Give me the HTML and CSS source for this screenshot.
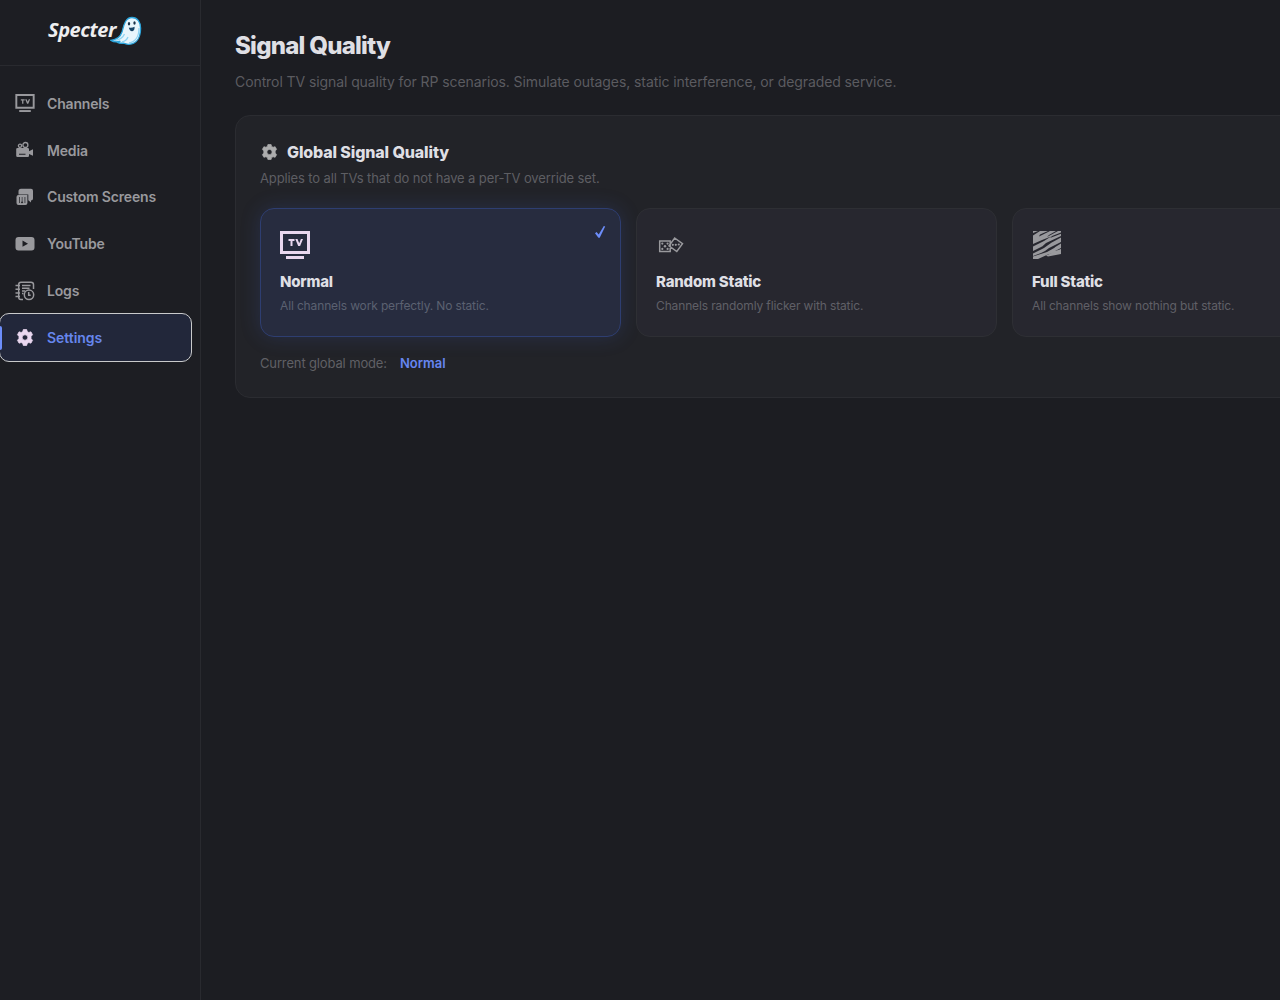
FILE: index.html
```html
<!DOCTYPE html>
<html lang="en">
<head>
<meta charset="utf-8">
<title>Specter – Signal Quality</title>
<link rel="stylesheet" href="styles.css">
</head>
<body>
<svg class="defs" width="0" height="0" aria-hidden="true">
  <symbol id="tv" viewBox="0 0 30 28">
    <path fill-rule="evenodd" d="M0 0h30v23H0zM3 3v17h24V3z"/>
    <path d="M6 25h18v3H6z"/>
    <path d="M8.500 8h6v2h-2v5h-2v-5h-2zM15.300 8h2.200l1.700 4.200L20.900 8h2.100l-2.900 7h-1.900z"/>
  </symbol>
  <symbol id="gear" viewBox="0 0 16 16">
    <path fill-rule="evenodd" stroke="currentColor" stroke-width=".7" stroke-linejoin="round" d="M6.400.5h3.200l.5 1.900 1.500.85 2-.6 1.500 2.700L13.700 7v2l1.400 1.650-1.500 2.700-2-.6-1.500.85-.5 1.900H6.400l-.5-1.900-1.500-.85-2 .6-1.500-2.700L2.300 9V7L.9 5.350l1.500-2.700 2 .6 1.500-.85zM8 5.400a2.600 2.600 0 1 0 0 5.200 2.600 2.600 0 0 0 0-5.200z"/>
  </symbol>
</svg>
<div class="app">
  <aside class="sidebar">
    <div class="brand">
      <span class="brand-name">Specter</span>
      <svg class="ghost" width="32" height="30" viewBox="0 0 32 30">
        <path d="M22 1.500c5.500 0 8.700 4.700 8.600 11C30.500 21 27 28 19 28.300c-2.500.1-4-.7-5.500-1.200-2 .3-4.500.1-6-.7 1-.2 2-.6 2.800-1.200-2.700.8-6.800.8-9.300-.8 6-.7 9.500-3.900 11-8.400C13.700 10 15 1.500 22 1.500z" fill="#e8f5fc" stroke="#2ca5dc" stroke-width="1.300"/>
        <path d="M29 12c0 8-3.500 14-10 14.800M5 24.400c5-.8 8-3 9.500-6.500M12 26c3-.8 5-2.500 6-5" fill="none" stroke="#8fd3f2" stroke-width="1.300"/>
        <ellipse cx="19" cy="7.700" rx="1.200" ry="1.800" fill="#193249"/>
        <ellipse cx="24.500" cy="7" rx="1.200" ry="1.800" fill="#193249"/>
        <path d="M18.800 11.500c2 .5 4 .2 5.800-.7.200 2.500-.8 4.400-2.400 4.500-1.600.1-2.900-1.300-3.400-3.800z" fill="#174467"/>
      </svg>
    </div>
    <nav class="nav">
      <a class="nav-item"><svg class="nav-icon" width="20" height="18"><use href="#tv"/></svg><span>Channels</span></a>
      <a class="nav-item"><svg class="nav-icon" width="20" height="18" viewBox="0 0 20 18">
        <g fill="none" stroke="currentColor" stroke-width="1.300"><circle cx="5" cy="4.800" r="1.600"/><circle cx="10.400" cy="4" r="2.500"/></g>
        <path fill-rule="evenodd" d="M2.500 7h10.300q1.200 0 1.200 1.200v2L18 8.200v6.600l-4-1.700v1.700q0 1.200-1.200 1.200H2.500q-1.300 0-1.300-1.200V8.200Q1.200 7 2.500 7zM4 12.800v1h6.500v-1z"/></svg><span>Media</span></a>
      <a class="nav-item"><svg class="nav-icon" width="20" height="18" viewBox="0 0 20 18">
        <path d="M6 .8h10q2 0 2 2v7.700q0 2-2 2v2L13.300 12.200V6.500H3.500V3.300Q3.500.8 6 .8z"/>
        <path fill-rule="evenodd" d="M3.500 7.100h8.900V15q0 2-2 2H3.500q-2 0-2-2V9.100q0-2 2-2zM4.300 9v6H5V9zm2.500 0v4.500l-1 .8 1.200 1.200 1.300-1.200-.9-.8V9zm2.800 0v6h.7V9z"/></svg><span>Custom Screens</span></a>
      <a class="nav-item"><svg class="nav-icon" width="20" height="18" viewBox="0 0 20 18"><path fill-rule="evenodd" d="M3.500 2h13q3 0 3 3v7.500q0 3-3 3h-13q-3 0-3-3V5q0-3 3-3zM7.500 5.500v6.300L13 8.650z"/></svg><span>YouTube</span></a>
      <a class="nav-item"><svg class="nav-icon" width="20" height="20" viewBox="0 0 20 20"><g fill="none" stroke="currentColor" stroke-width="1.500">
        <path d="M8 18.500H6q-2.300 0-2.300-2.300V3.500q0-2.300 2.300-2.300h10q2.500 0 2.500 2.300V8M.5 4.500h4.500M.5 8.200h4.500M.5 12h4.500M.5 15.600h4.500M7 4.500h8.500M7 7.200h7.500M7 9.900h3.200M7 12.600h1.500"/><circle cx="14" cy="13.800" r="4.700"/><path d="M13.700 11v3.200h2"/></g></svg><span>Logs</span></a>
      <a class="nav-item active"><svg class="nav-icon gear" width="20" height="17"><use href="#gear"/></svg><span>Settings</span></a>
    </nav>
  </aside>
  <main class="main">
    <h1>Signal Quality</h1>
    <p class="lead">Control TV signal quality for RP scenarios. Simulate outages, static interference, or degraded service.</p>
    <section class="card">
      <h2><svg width="19" height="16"><use href="#gear"/></svg><span>Global Signal Quality</span></h2>
      <p class="hint">Applies to all TVs that do not have a per-TV override set.</p>
      <div class="options">
        <div class="option selected">
          <svg class="option-icon" width="30" height="28"><use href="#tv"/></svg>
          <h3>Normal</h3><p>All channels work perfectly. No static.</p>
          <svg class="check" width="12" height="14" viewBox="0 0 12 14"><path d="M1 8.300 2.600 7l2.100 2.600L9.800 1l1.400.5-5.500 11.300H4.400z"/></svg>
        </div>
        <div class="option">
          <svg class="option-icon" width="30" height="28" viewBox="0 0 30 28">
            <g fill="none" stroke="currentColor" stroke-width="1.500"><path d="M3.700 10h10.500v10.500H3.700zM18.700 7l7.800 5.700-5.700 7.800L13 14.800z"/></g>
            <circle cx="6.300" cy="12.600" r="1.100"/><circle cx="11.600" cy="12.600" r="1.100"/><circle cx="6.300" cy="17.900" r="1.100"/><circle cx="11.600" cy="17.900" r="1.100"/>
            <circle cx="9" cy="15.200" r="1.200"/><circle cx="16.800" cy="13.800" r="1.100"/><circle cx="19.800" cy="13.800" r="1.100"/><circle cx="22.800" cy="13.500" r="1.100"/></svg>
          <h3>Random Static</h3><p>Channels randomly flicker with static.</p>
        </div>
        <div class="option">
          <svg class="option-icon" width="30" height="28" viewBox="0 0 30 28">
            <path d="M1 0h28v28H1z"/>
            <path class="scratch" d="M1 2 6 0H8L1 4.500zM8 3.500 16 0h2L7 5.500zM17 4 24 0h2L15 6zM20 5 29 1.500v1.300L18 7zM1 13 10 9 19 5.500 12 10 1 15.500zM14 12 29 5v1.500L17 13l-9 4.500zM1 20 11 15l8-3-7 5-11 5.500zM17 17 29 11v1.500L20 18l-9 3.500zM9 22l10-5 4-.5-8 4.500-14 4.500V25zM23 20l6-3v1.500zM6 28l11-5 12-1v6z"/>
            <path d="M14 24.500 29 18v5l-13 2.500z"/>
          </svg>
          <h3>Full Static</h3><p>All channels show nothing but static.</p>
        </div>
      </div>
      <div class="mode"><span>Current global mode:</span><strong>Normal</strong></div>
    </section>
  </main>
</div>
</body>
</html>
```
FILE: styles.css
```css
* { box-sizing: border-box; }
body { margin: 0; background: #1c1d22; color: #dfdfe4; font-family: Inter, "Liberation Sans", sans-serif; overflow: hidden; }
h1, h2, h3, p { margin: 0; }
svg { fill: currentColor; flex: none; }
.defs { display: block; }
.app { display: flex; height: 1000px; overflow: hidden; }
.sidebar { width: 201px; flex: none; background: #1d1e23; border-right: 1px solid #292a2f; }
.brand { height: 66px; border-bottom: 1px solid #292a2f; display: flex; padding: 16px 0 0 48px; }
.brand-name { width: 62px; font: italic 700 20px/27px "Open Sans", sans-serif; letter-spacing: -0.45px; color: #eeeef0; white-space: nowrap; }
.nav { padding-top: 14px; display: flex; flex-direction: column; }
.nav-item { height: 46.8px; display: flex; align-items: center; gap: 12px; padding-left: 15px; color: #99999d; font-size: 14px; font-weight: 600; letter-spacing: -0.17px; }
.nav-icon { width: 20px; }
.active { width: 193px; height: 49px; margin: -1px 0 0 -1px; padding-left: 15px; background: #22273a; border: 1px solid #c9cacb; border-radius: 10px; color: #6686ed; letter-spacing: -0.05px; position: relative; }
.active::before { content: ""; position: absolute; left: -1px; top: 12px; width: 3px; height: 24px; background: #6c8dfa; border-radius: 0 2px 2px 0; }
.gear { color: #e9d7ef; }
.main { flex: 1; min-width: 0; overflow: hidden; padding: 31px 0 0 34px; }
h1 { font-size: 24px; line-height: 29px; font-weight: 800; letter-spacing: -0.75px; }
.lead { margin-top: 12px; font-size: 14px; line-height: 20px; letter-spacing: -0.087px; color: #5b5b60; }
.card { width: 1162px; margin-top: 23px; height: 283px; padding: 26px 24px 0; background: #222328; border: 1px solid #2b2c31; border-radius: 15px; }
h2 { display: flex; align-items: center; gap: 8px; font-size: 16px; line-height: 20px; font-weight: 800; letter-spacing: -0.13px; }
h2 svg { color: #acacad; }
.hint { margin-top: 6px; font-size: 13px; line-height: 20px; letter-spacing: -0.12px; color: #5e5e63; }
.options { margin-top: 20px; display: grid; grid-template-columns: repeat(3, 361px); gap: 15px; }
.option { height: 129px; padding: 22px 19px; background: #27272f; border: 1px solid #2e2f34; border-radius: 14px; position: relative; }
.option-icon { display: block; color: #99999d; }
.option h3 { margin-top: 13px; font-size: 15px; line-height: 20px; font-weight: 800; letter-spacing: -0.2px; }
.option p { margin-top: 5px; font-size: 12px; line-height: 17px; letter-spacing: -0.14px; color: #606067; }
.scratch { fill: #27272f; }
.selected { background: #272c3f; border-color: #2e3e71; box-shadow: 0 0 20px rgba(65, 95, 190, .22); }
.option.selected p { color: #5b6171; }
.selected .option-icon { color: #e9d7ef; }
.check { position: absolute; right: 14px; top: 16px; color: #6c8dfa; }
.mode { margin-top: 16px; display: flex; gap: 13px; font-size: 13px; line-height: 20px; letter-spacing: -0.14px; color: #606065; }
.mode strong { color: #6686f0; font-weight: 600; letter-spacing: 0; }
```
